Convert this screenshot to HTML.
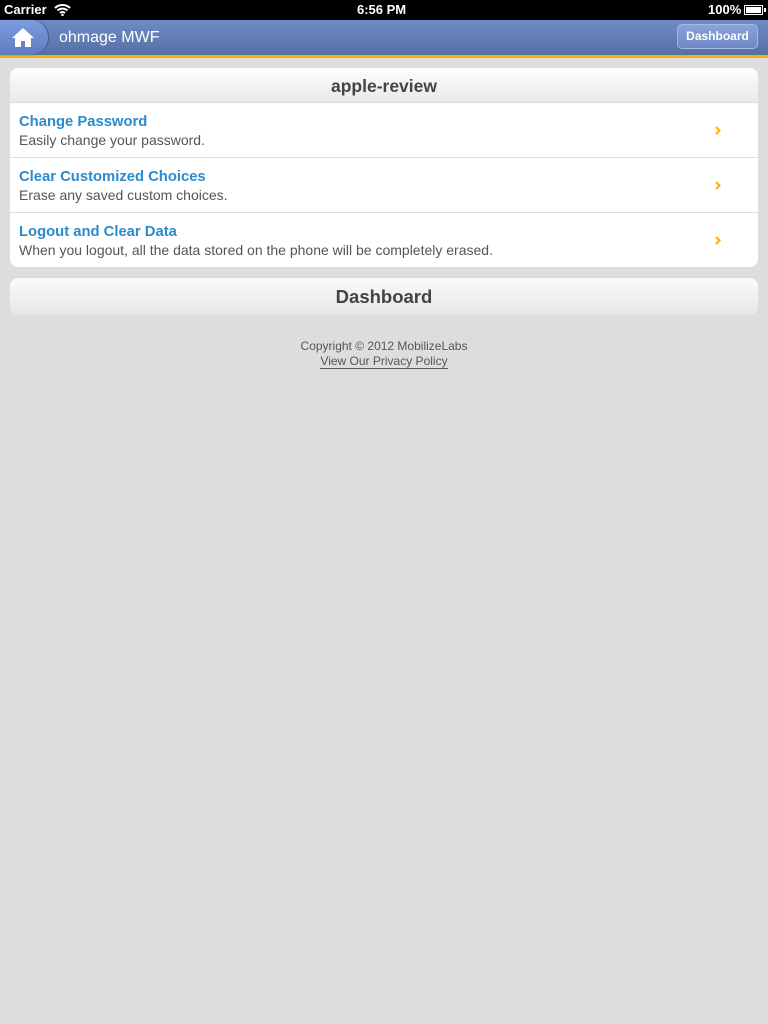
<!DOCTYPE html>
<html><head><meta charset="utf-8"><style>
*{margin:0;padding:0;box-sizing:border-box}
body{width:768px;height:1024px;background:#dddddd;font-family:"Liberation Sans",Arial,sans-serif;position:relative;overflow:hidden}
.sb{position:absolute;top:0;left:0;width:768px;height:20px;background:#000;color:#fff;font-size:13px;font-weight:bold}
.hdr{position:absolute;top:20px;left:0;width:768px;background:linear-gradient(#6d8cc6,#5670a4);border-bottom:3px solid #fbb100;height:38px}
.home{position:absolute;left:0;top:0;width:48px;height:35px;background:linear-gradient(#7e9ee0,#5d7bc0);border-radius:0 18px 18px 0/0 18px 18px 0;box-shadow:1px 0 1px #3e5585}
.title{position:absolute;left:59px;top:9px;color:#fff;font-size:16px}
.btn{position:absolute;right:10px;top:4px;width:81px;height:25px;border:1px solid #a9b8dd;border-radius:5px;background:linear-gradient(#8aa3dc,#6d87c4);color:#fff;font-size:12px;font-weight:bold;text-align:center;line-height:23px}
.card{position:absolute;left:10px;top:68px;width:748px;background:#fff;border-radius:8px;overflow:hidden}
.ch{height:35px;background:linear-gradient(#fdfdfd,#e9e9e9);text-align:center;font-size:17.5px;font-weight:bold;color:#444;line-height:36px;border-bottom:1px solid #dcdcdc}
.row{height:55px;border-bottom:1px solid #dcdcdc;position:relative;padding:10px 9px}
.row:last-child{border-bottom:none;height:54px}
.row b{display:block;color:#2a8bcd;font-size:14.8px;line-height:18px}
.row span{display:block;color:#555;font-size:14px;line-height:18px}
.row svg{position:absolute;left:705px;top:23px}
.dash{position:absolute;left:10px;top:278px;width:748px;height:37px;border-radius:8px;background:linear-gradient(#fbfbfb,#e6e6e6);text-align:center;line-height:38px;font-size:18.5px;font-weight:bold;color:#444}
.ft{position:absolute;top:339px;left:0;width:768px;text-align:center;font-size:12px;color:#555;line-height:15px}
.ft u{text-decoration:none;border-bottom:1px solid #555}
</style></head><body>
<div class="sb"><span style="position:absolute;left:4px;top:2px">Carrier</span>
<svg style="position:absolute;left:54px;top:3px" width="17" height="13" viewBox="0 0 17 13"><path d="M1 5a11 11 0 0 1 15 0M3.5 7.5a7.5 7.5 0 0 1 10 0M6 10a3.5 3.5 0 0 1 5 0" stroke="#fff" stroke-width="2" fill="none"/><circle cx="8.5" cy="12" r="1.2" fill="#fff"/></svg>
<span style="position:absolute;left:357px;top:2px">6:56 PM</span>
<span style="position:absolute;left:708px;top:2px">100%</span>
<div style="position:absolute;left:744px;top:5px;width:19px;height:10px;border:1px solid #fff;padding:1px"><div style="background:#fff;height:100%"></div></div>
<div style="position:absolute;left:764px;top:8px;width:2px;height:4px;background:#fff"></div></div>
<div class="hdr"><div class="home"><svg style="position:absolute;left:11px;top:7px" width="24" height="21" viewBox="0 0 24 21"><path d="M12 1L1 11h3v9h6v-6h4v6h6v-9h3z" fill="#fff"/></svg></div>
<div class="title">ohmage MWF</div><div class="btn">Dashboard</div></div>
<div class="card"><div class="ch">apple-review</div>
<div class="row"><b>Change Password</b><span>Easily change your password.</span><svg width="6" height="9" viewBox="0 0 6 9"><path d="M1 1l3.5 3.5L1 8" stroke="#fbb100" stroke-width="2" fill="none"/></svg></div>
<div class="row"><b>Clear Customized Choices</b><span>Erase any saved custom choices.</span><svg width="6" height="9" viewBox="0 0 6 9"><path d="M1 1l3.5 3.5L1 8" stroke="#fbb100" stroke-width="2" fill="none"/></svg></div>
<div class="row"><b>Logout and Clear Data</b><span>When you logout, all the data stored on the phone will be completely erased.</span><svg width="6" height="9" viewBox="0 0 6 9"><path d="M1 1l3.5 3.5L1 8" stroke="#fbb100" stroke-width="2" fill="none"/></svg></div>
</div>
<div class="dash">Dashboard</div>
<div class="ft">Copyright © 2012 MobilizeLabs<br><u>View Our Privacy Policy</u></div>
</body></html>
